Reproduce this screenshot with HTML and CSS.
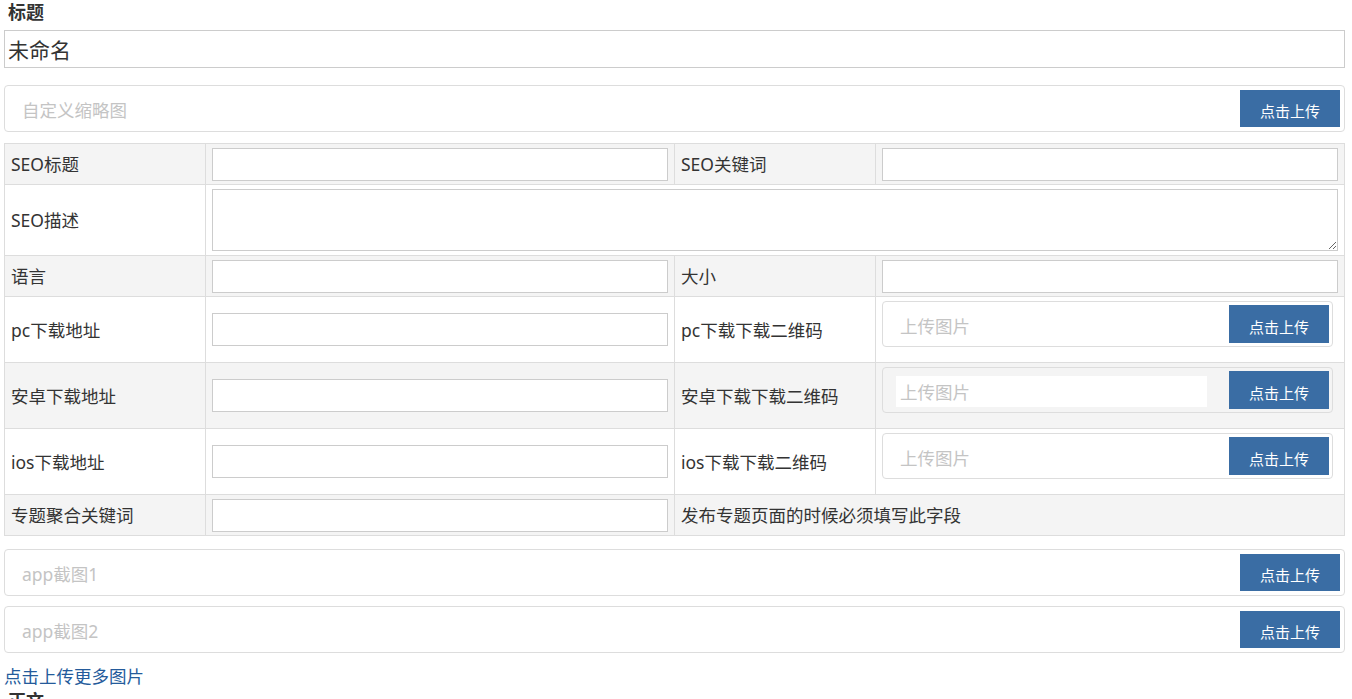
FILE: index.html
```html
<!DOCTYPE html>
<html lang="zh-CN">
<head>
    <meta charset="UTF-8">
    <meta name="viewport" content="width=device-width, initial-scale=1.0">
    <title>编辑</title>
    <link rel="stylesheet" href="styles.css">
</head>
<body>
    <div class="form">
        <label class="field-label">标题</label>
        <input class="title-input" type="text" value="未命名">

        <div class="upload upload-wide thumb">
            <input class="upload-input" type="text" placeholder="自定义缩略图">
            <button class="upload-btn">点击上传</button>
        </div>

        <table class="meta">
            <colgroup>
                <col class="col-label">
                <col class="col-field">
                <col class="col-label">
                <col class="col-field">
            </colgroup>
            <tr class="row-short">
                <td>SEO标题</td>
                <td><input class="text-input" type="text"></td>
                <td>SEO关键词</td>
                <td><input class="text-input" type="text"></td>
            </tr>
            <tr class="row-desc">
                <td>SEO描述</td>
                <td colspan="3"><textarea class="text-area"></textarea></td>
            </tr>
            <tr class="row-short">
                <td>语言</td>
                <td><input class="text-input" type="text"></td>
                <td>大小</td>
                <td><input class="text-input" type="text"></td>
            </tr>
            <tr class="row-upload">
                <td>pc下载地址</td>
                <td><input class="text-input" type="text"></td>
                <td>pc下载下载二维码</td>
                <td>
                    <div class="upload upload-cell">
                        <input class="upload-input" type="text" placeholder="上传图片">
                        <button class="upload-btn">点击上传</button>
                    </div>
                </td>
            </tr>
            <tr class="row-upload">
                <td>安卓下载地址</td>
                <td><input class="text-input" type="text"></td>
                <td>安卓下载下载二维码</td>
                <td>
                    <div class="upload upload-cell">
                        <input class="upload-input" type="text" placeholder="上传图片">
                        <button class="upload-btn">点击上传</button>
                    </div>
                </td>
            </tr>
            <tr class="row-upload">
                <td>ios下载地址</td>
                <td><input class="text-input" type="text"></td>
                <td>ios下载下载二维码</td>
                <td>
                    <div class="upload upload-cell">
                        <input class="upload-input" type="text" placeholder="上传图片">
                        <button class="upload-btn">点击上传</button>
                    </div>
                </td>
            </tr>
            <tr class="row-last">
                <td>专题聚合关键词</td>
                <td><input class="text-input" type="text"></td>
                <td colspan="2">发布专题页面的时候必须填写此字段</td>
            </tr>
        </table>

        <div class="upload upload-wide">
            <input class="upload-input" type="text" placeholder="app截图1">
            <button class="upload-btn">点击上传</button>
        </div>
        <div class="upload upload-wide">
            <input class="upload-input" type="text" placeholder="app截图2">
            <button class="upload-btn">点击上传</button>
        </div>

        <a class="more-link" href="#">点击上传更多图片</a>
        <label class="field-label">正文</label>
    </div>
</body>
</html>
```

FILE: styles.css
```css
body {
    margin: 0;
    font-family: "Noto Sans", "Noto Sans CJK SC", sans-serif;
    font-size: 17.5px;
    color: #333;
    background-color: #fff;
}
.form {
    width: 1341px;
    margin: 0 4px;
}
.field-label {
    display: block;
    padding: 0 4px;
    font-size: 18px;
    font-weight: bold;
    line-height: 24px;
    margin-bottom: 6px;
}
.title-input {
    display: block;
    box-sizing: border-box;
    width: 100%;
    height: 38px;
    padding: 0 3px;
    border: 1px solid #ccc;
    font-family: inherit;
    font-size: 21px;
    color: #333;
    margin: 0 0 17px;
}

/* upload box */
.upload {
    display: flex;
    align-items: center;
    gap: 22px;
    box-sizing: border-box;
    border: 1px solid #ddd;
    border-radius: 4px;
    padding: 4px 4px 4px 13px;
}
.upload-wide {
    margin-bottom: 10px;
}
.upload-wide.thumb {
    margin-bottom: 11px;
}
.upload-cell {
    margin: 0 5px 11px 0;
    padding: 3px 3px 3px 13px;
}
.upload-input {
    flex: 1;
    min-width: 0;
    height: 31px;
    box-sizing: border-box;
    border: none;
    outline: none;
    background-color: #fff;
    padding: 0 4px;
    margin-top: 3px;
    font-family: inherit;
    font-size: 17.5px;
    color: #333;
}
.upload-input::placeholder {
    color: #c4c4c4;
}
.upload-btn {
    width: 100px;
    height: 37px;
    padding: 4px 0 0;
    border: none;
    background-color: #3a6da4;
    color: #fff;
    font-family: inherit;
    font-size: 15px;
}
.upload-cell .upload-btn {
    height: 38px;
}

/* meta table */
.meta {
    width: 100%;
    table-layout: fixed;
    border-collapse: collapse;
    margin-bottom: 13px;
}
.col-label {
    width: 15%;
}
.col-field {
    width: 35%;
}
.meta td {
    border: 1px solid #ddd;
    padding: 3px 6px;
    vertical-align: middle;
    line-height: 24px;
}
.meta tr:nth-child(odd) {
    background-color: #f4f4f4;
}
.row-short {
    height: 41px;
}
.row-desc {
    height: 71px;
}
.row-upload {
    height: 66px;
}
.row-last {
    height: 41px;
}
.text-input {
    display: block;
    box-sizing: border-box;
    width: 100%;
    height: 33px;
    border: 1px solid #ccc;
    background-color: #fff;
    font-family: inherit;
    font-size: 16px;
}
.text-area {
    display: block;
    box-sizing: border-box;
    width: 100%;
    height: 62px;
    margin: 1px 0;
    border: 1px solid #ccc;
    font-family: inherit;
    font-size: 16px;
}

.more-link {
    display: block;
    width: max-content;
    color: #245b9b;
    text-decoration: none;
    line-height: 26px;
}
```
